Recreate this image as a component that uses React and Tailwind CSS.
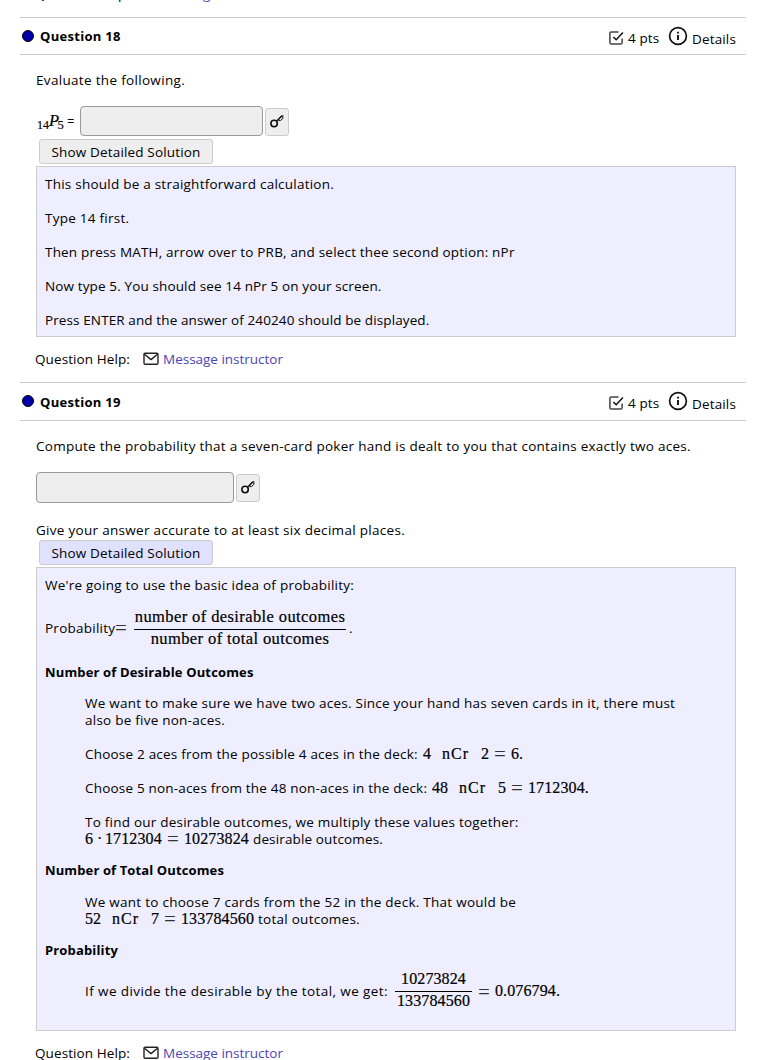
import React from 'react';

// A run of serif maths text.
function M({ className = '', children }) {
  return (
    <span className={`inline-block whitespace-pre font-['Liberation_Serif',serif] text-[16px] leading-[14px] tracking-[0.11px] [-webkit-text-stroke:0.2px] ${className}`}>
      {children}
    </span>
  );
}

// Equals sign between maths terms: wider and lighter than the digits.
function Eq({ className = '' }) {
  return <span className={`relative top-[2px] inline-block w-[18px] pl-px font-['Liberation_Serif',serif] text-[21px] leading-[8px] tracking-normal text-[#333] ${className}`}>=</span>;
}

// One line of body text; flex keeps each run on a shared baseline.
function Line({ className = '', children }) {
  return <div className={`flex h-[17px] items-baseline whitespace-pre leading-[17px] ${className}`}>{children}</div>;
}

function Key() {
  return (
    <button className="flex h-7 w-6 items-center justify-center rounded-[3px] border border-[#ccc] bg-[#eee]">
      <svg width="16" height="16" viewBox="0 0 16 16" fill="none" stroke="#111" strokeWidth="1.6">
        <circle cx="5.1" cy="9.5" r="3.2" />
        <path d="M7.4 7.2 L13.4 1.4" strokeWidth="1.4" />
        <path d="M9.8 4.9 V6.6 H11.4 L13.8 4.6 V1.2 M10.4 4 L12 2.2" strokeWidth="1" />
      </svg>
    </button>
  );
}

function Help() {
  return (
    <div className="ml-[35px] flex h-[17px] items-center whitespace-pre leading-[17px]">
      <span className="mt-[2px] w-[108px] tracking-[0.095px]">Question Help:</span>
      <svg width="16" height="14" viewBox="0 0 16 14" fill="none" stroke="#222" strokeWidth="1.4" strokeLinejoin="round">
        <rect x="1" y="1.2" width="14" height="11" rx="1.2" />
        <path d="M1.5 2.2 L8 7.6 L14.5 2.2" />
      </svg>
      <span className="mt-[2px] ml-1 tracking-[-0.01px] text-[#4a45b5]">Message instructor</span>
    </div>
  );
}

function Header({ n, className, titleClass }) {
  return (
    <div className={`ml-5 flex w-[726px] items-start border-y border-[#ccc] pr-[10px] pl-[2px] ${className}`}>
      <svg className="mt-[12px]" width="12" height="12" viewBox="0 0 12 12">
        <circle cx="6" cy="6" r="5.5" fill="#0000a8" stroke="#000" />
      </svg>
      <span className={`ml-[6px] text-[13px] leading-[17px] font-bold tracking-[0.3px] ${titleClass}`}>Question {n}</span>
      <div className="ml-auto flex h-[36px] items-center">
        <svg className="mt-[3px]" width="15" height="14" viewBox="0 0 15 14" fill="none" strokeLinejoin="round">
          <path d="M9.5 1 H2.2 Q0.9 1 0.9 2.3 V11.7 Q0.9 13 2.2 13 H11.8 Q13.1 13 13.1 11.7 V7.5" stroke="#444" strokeWidth="1.5" />
          <path d="M4.4 6 L7.2 8.8 L13.9 1.6" stroke="#111" strokeWidth="1.5" />
        </svg>
        <span className="mt-[5px] ml-[4px] w-[40px] tracking-[0.1px] whitespace-pre">4 pts</span>
        <svg className="-mt-px" width="20" height="20" viewBox="0 0 20 20" fill="none" stroke="#111">
          <circle cx="10" cy="10" r="8.4" strokeWidth="1.7" />
          <path d="M10 8.9 V14 M10 5.8 V7.6" strokeWidth="1.9" />
        </svg>
        <span className="mt-[7px] ml-[4px] w-[44px] tracking-[0.15px]">Details</span>
      </div>
    </div>
  );
}

function SolutionButton({ className }) {
  return (
    <button className={`ml-[39px] flex h-[25px] w-[174px] items-center justify-center rounded-[3px] border border-[#ccc] pt-[2px] tracking-[0.16px] ${className}`}>
      Show Detailed Solution
    </button>
  );
}

function Fraction({ top, bottom, className, text = '' }) {
  return (
    <div className={`flex flex-col items-center ${className}`}>
      <M className={`leading-[17px]! ${text}`}>{top}</M>
      <div className="mt-[4px] h-px w-full bg-black" />
      <M className={`leading-[17px]! ${text}`}>{bottom}</M>
    </div>
  );
}

export default function App() {
  return (
    <div className="h-[1060px] w-[784px] overflow-hidden bg-white font-['Open_Sans',sans-serif] text-[13.5px] leading-[17px] text-black">
      <div className="-mt-[15px]">
        <Help />
      </div>
      <div className="mt-[15px]">
        <Header n="18" className="h-[38px]" titleClass="mt-[10px]" />
      </div>
      <Line className="mt-[17px] ml-9 tracking-[0.32px]">Evaluate the following.</Line>
      <div className="mt-[17px] ml-9 flex h-[30px] items-center">
        <div className="flex w-[44px] items-baseline font-['Liberation_Serif',serif] [-webkit-text-stroke:0.2px]">
          <span className="relative top-[3px] ml-px text-[12px]">14</span>
          <span className="text-[16.5px] italic">P</span>
          <span className="relative top-[3px] -ml-[1.5px] text-[12.5px]">5</span>
          <span className="ml-[3.5px] font-['Open_Sans',sans-serif] text-[12px]">=</span>
        </div>
        <div className="h-[30px] w-[183px] rounded-[4px] border border-[#999] bg-[#eee]" />
        <div className="mt-[2px] ml-[2px]"><Key /></div>
      </div>
      <SolutionButton className="mt-[3px] bg-[#eee]" />
      <div className="mt-[2px] ml-9 flex h-[171px] w-[700px] flex-col gap-[17px] border border-[#ccc] bg-[#eef] px-2 pt-[9px]">
        <Line className="tracking-[0.235px]">This should be a straightforward calculation.</Line>
        <Line className="tracking-[0.25px]">Type 14 first.</Line>
        <Line className="tracking-[0.19px]">Then press MATH, arrow over to PRB, and select thee second option: nPr</Line>
        <Line className="tracking-[0.13px]">Now type 5. You should see 14 nPr 5 on your screen.</Line>
        <Line className="tracking-[0.11px]">Press ENTER and the answer of 240240 should be displayed.</Line>
      </div>
      <div className="mt-[13px]">
        <Help />
      </div>
      <div className="mt-[15px]">
        <Header n="19" className="h-[39px]" titleClass="mt-[11px]" />
      </div>
      <Line className="mt-[17px] ml-9 tracking-[0.27px]">Compute the probability that a seven-card poker hand is dealt to you that contains exactly two aces.</Line>
      <div className="mt-[17px] ml-9 flex h-[31px] items-center">
        <div className="h-[31px] w-[198px] rounded-[4px] border border-[#999] bg-[#eee]" />
        <div className="ml-[2px]"><Key /></div>
      </div>
      <Line className="mt-[19px] ml-9 tracking-[0.3px]">Give your answer accurate to at least six decimal places.</Line>
      <SolutionButton className="mt-px bg-[#e0e0ff]" />
      <div className="mt-[2px] ml-9 h-[464px] w-[700px] border border-[#ccc] bg-[#eef] px-2 pt-[9px]">
        <Line className="tracking-[0.24px]">We're going to use the basic idea of probability:</Line>
        <div className="mt-[14px] flex h-[40px] items-start whitespace-pre">
          <span className="mt-[12px] w-[69px] tracking-[0.25px]">Probability</span>
          <Eq className="mt-[14px] w-[20px]!" />
          <Fraction className="w-[212px]" text="text-[16.5px]! tracking-[0.4px]!" top="number of desirable outcomes" bottom="number of total outcomes" />
          <span className="mt-[12px] ml-[3px]">.</span>
        </div>
        <Line className="mt-[16px] text-[13px] font-bold tracking-[0.145px]">Number of Desirable Outcomes</Line>
        <div className="ml-10">
          <Line className="mt-[14px] tracking-[0.24px]">We want to make sure we have two aces. Since your hand has seven cards in it, there must</Line>
          <Line className="tracking-[0.24px]">also be five non-aces.</Line>
          <Line className="mt-[17px] tracking-[0.21px]">
            <span className="w-[338px]">Choose 2 aces from the possible 4 aces in the deck:</span>
            <M className="w-[19px]">4</M><M className="w-[39px] tracking-[1px]!">nCr</M><M className="w-[12px]">2</M><Eq /><M>6.</M>
          </Line>
          <Line className="mt-[17px] tracking-[0.19px]">
            <span className="w-[347px]">Choose 5 non-aces from the 48 non-aces in the deck:</span>
            <M className="w-[27px]">48</M><M className="w-[39px] tracking-[1px]!">nCr</M><M className="w-[12px]">5</M><Eq /><M>1712304.</M>
          </Line>
          <Line className="mt-[17px] tracking-[0.23px]">To find our desirable outcomes, we multiply these values together:</Line>
          <Line className="tracking-[0.14px]">
            <M className="w-[12px]">6</M><M className="w-[8px]">·</M><M className="w-[61px]">1712304</M><Eq /><M className="w-[69px]">10273824</M>
            <span>desirable outcomes.</span>
          </Line>
        </div>
        <Line className="mt-[14px] text-[13px] font-bold tracking-[0.12px]">Number of Total Outcomes</Line>
        <div className="ml-10">
          <Line className="mt-[15px] tracking-[0.26px]">We want to choose 7 cards from the 52 in the deck. That would be</Line>
          <Line className="tracking-[0.26px]">
            <M className="w-[27px]">52</M><M className="w-[39px] tracking-[1px]!">nCr</M><M className="w-[12px]">7</M><Eq /><M className="w-[77px]">133784560</M>
            <span>total outcomes.</span>
          </Line>
        </div>
        <Line className="mt-[14px] text-[13px] font-bold tracking-[0.15px]">Probability</Line>
        <div className="mt-[11px] ml-10 flex h-[39px] items-start whitespace-pre">
          <span className="mt-[13px] w-[310px] tracking-[0.41px]">If we divide the desirable by the total, we get:</span>
          <Fraction className="w-[77px]" top="10273824" bottom="133784560" />
          <Eq className="mt-[16px] ml-[5px]" />
          <M className="mt-[14px]">0.076794.</M>
        </div>
      </div>
      <div className="mt-[13px]">
        <Help />
      </div>
    </div>
  );
}
